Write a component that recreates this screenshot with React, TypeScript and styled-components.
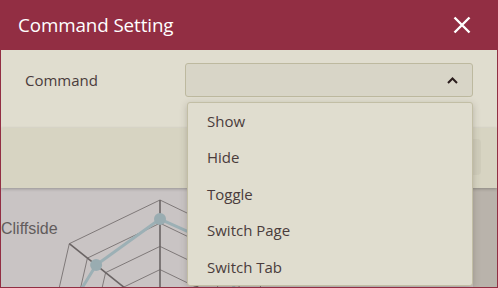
import React from "react";
import styled, { createGlobalStyle } from "styled-components";

const GlobalStyle = createGlobalStyle`
	html, body {
		margin: 0;
		padding: 0;
		background: #922e43;
	}
	body {
		font-family: "Open Sans", "Noto Sans", sans-serif;
	}
`;

const commands = ["Show", "Hide", "Toggle", "Switch Page", "Switch Tab"];

// radar chart geometry, in page coordinates
const CX = 160;
const CY = 316;
const R = 116;
const AXES = 7;
const values = [0.836, 0.86, 0.6, 0.7, 0.5, 0.98, 0.704];

const pointAt = (k: number, f: number) => {
	const a = (k * 2 * Math.PI) / AXES;
	return [CX + R * f * Math.sin(a), CY - R * f * Math.cos(a)];
};

const ring = (f: number) =>
	Array.from(Array(AXES).keys())
		.map((k) => pointAt(k, f).map((n) => n.toFixed(1)).join(","))
		.join(" ");

const RadarChart = () => {
	const data = values.map((v, k) => pointAt(k, v));
	return (
		<StyledChartSvg viewBox="1 188 472 99" width={472} height={99}>
			{[0.2, 0.4, 0.6, 0.8, 1].map((f) => (
				<polygon
					key={f}
					points={ring(f)}
					fill="none"
					stroke="#7f7979"
					strokeWidth={1}
				/>
			))}
			{Array.from(Array(AXES).keys()).map((k) => {
				const [x, y] = pointAt(k, 1);
				return (
					<line
						key={k}
						x1={CX}
						y1={CY}
						x2={x}
						y2={y}
						stroke="#6a6464"
						strokeWidth={1.6}
					/>
				);
			})}
			<polygon
				points={data.map((p) => p.join(",")).join(" ")}
				fill="none"
				stroke="#9cb0b5"
				strokeWidth={3}
			/>
			{data.map(([x, y], k) => (
				<circle key={k} cx={x} cy={y} r={6} fill="#99acb1" />
			))}
			<StyledAxisLabel x={1} y={234}>
				Cliffside
			</StyledAxisLabel>
		</StyledChartSvg>
	);
};

const CloseIcon = () => (
	<svg width="18" height="18" viewBox="0 0 18 18">
		<path
			d="M1.5 1.5 L16.5 16.5 M16.5 1.5 L1.5 16.5"
			stroke="#ffffff"
			strokeWidth="2.4"
			fill="none"
		/>
	</svg>
);

const ChevronUp = () => (
	<svg width="11" height="7" viewBox="0 0 11 7">
		<path
			d="M1 6 L5.5 1.5 L10 6"
			stroke="#2b1d1d"
			strokeWidth="2"
			fill="none"
		/>
	</svg>
);

export default function App() {
	return (
		<>
			<GlobalStyle />
			<StyledWindow>
				<StyledHeader>
					<StyledTitle>Command Setting</StyledTitle>
					<StyledCloseButton aria-label="Close">
						<CloseIcon />
					</StyledCloseButton>
				</StyledHeader>
				<StyledFormRow>
					<StyledLabel>Command</StyledLabel>
					<StyledSelectWrap>
						<StyledSelect>
							<ChevronUp />
						</StyledSelect>
						<StyledMenu>
							{commands.map((item) => (
								<StyledMenuItem key={item}>{item}</StyledMenuItem>
							))}
						</StyledMenu>
					</StyledSelectWrap>
				</StyledFormRow>
				<StyledToolbar>
					<StyledToolbarButton />
				</StyledToolbar>
				<StyledChartArea>
					<RadarChart />
					<StyledSidePanel />
				</StyledChartArea>
			</StyledWindow>
		</>
	);
}

const StyledWindow = styled.div`
	width: 498px;
	height: 288px;
	box-sizing: border-box;
	display: flex;
	flex-direction: column;
	border: 1px solid #922e43;
	border-top: none;
	background: #e0ddcf;
	overflow: hidden;
`;

const StyledHeader = styled.header`
	height: 50px;
	margin: 0 -1px;
	flex: none;
	display: flex;
	align-items: center;
	justify-content: space-between;
	padding: 0 27px 0 18px;
	background: #922e43;
`;

const StyledTitle = styled.h1`
	margin: 0;
	font-size: 18.8px;
	font-weight: 400;
	color: #ffffff;
	letter-spacing: -0.1px;
`;

const StyledCloseButton = styled.button`
	display: flex;
	padding: 0;
	border: none;
	background: none;
	cursor: pointer;
`;

const StyledFormRow = styled.div`
	height: 78px;
	flex: none;
	box-sizing: border-box;
	display: grid;
	grid-template-columns: 160px 1fr;
	align-items: start;
	padding: 13px 24px 0 24px;
	position: relative;
	z-index: 3;
`;

const StyledLabel = styled.label`
	font-size: 15px;
	line-height: 34px;
	color: #4a3c3c;
`;

const StyledSelectWrap = styled.div`
	position: relative;
`;

const StyledSelect = styled.div`
	height: 34px;
	box-sizing: border-box;
	display: flex;
	align-items: center;
	justify-content: flex-end;
	padding-right: 14px;
	background: #d8d5c7;
	border: 1px solid #bdb99f;
	border-radius: 3px;
`;

const StyledMenu = styled.ul`
	position: absolute;
	top: 39px;
	left: 2px;
	right: 0;
	margin: 0;
	padding: 0;
	list-style: none;
	background: #e0ddcf;
	border: 1px solid #c2bea5;
	border-radius: 3px;
	box-shadow: 0 2px 7px rgba(60, 50, 40, 0.25);
`;

const StyledMenuItem = styled.li`
	height: 36.6px;
	display: flex;
	align-items: center;
	padding: 0 19px;
	font-size: 15px;
	color: #4a3c3c;
	&:first-child {
		height: 36px;
	}
`;

const StyledToolbar = styled.div`
	height: 60px;
	flex: none;
	box-sizing: border-box;
	display: flex;
	justify-content: flex-end;
	align-items: flex-start;
	padding: 11px 16px 0 0;
	background: #d7d4c2;
	box-shadow: 0 1px 3px rgba(0, 0, 0, 0.25);
	position: relative;
	z-index: 2;
`;

const StyledToolbarButton = styled.div`
	width: 90px;
	height: 36px;
	border-radius: 4px;
	background: #d0cdbb;
`;

const StyledChartArea = styled.div`
	flex: 1;
	display: flex;
	background: #c9c4c4;
	overflow: hidden;
`;

const StyledChartSvg = styled.svg`
	display: block;
	flex: none;
`;

const StyledAxisLabel = styled.text`
	font-family: "Liberation Sans", Arial, sans-serif;
	font-size: 16px;
	fill: #625c5c;
`;

const StyledSidePanel = styled.div`
	flex: 1;
	background: #b9b3ab;
`;
